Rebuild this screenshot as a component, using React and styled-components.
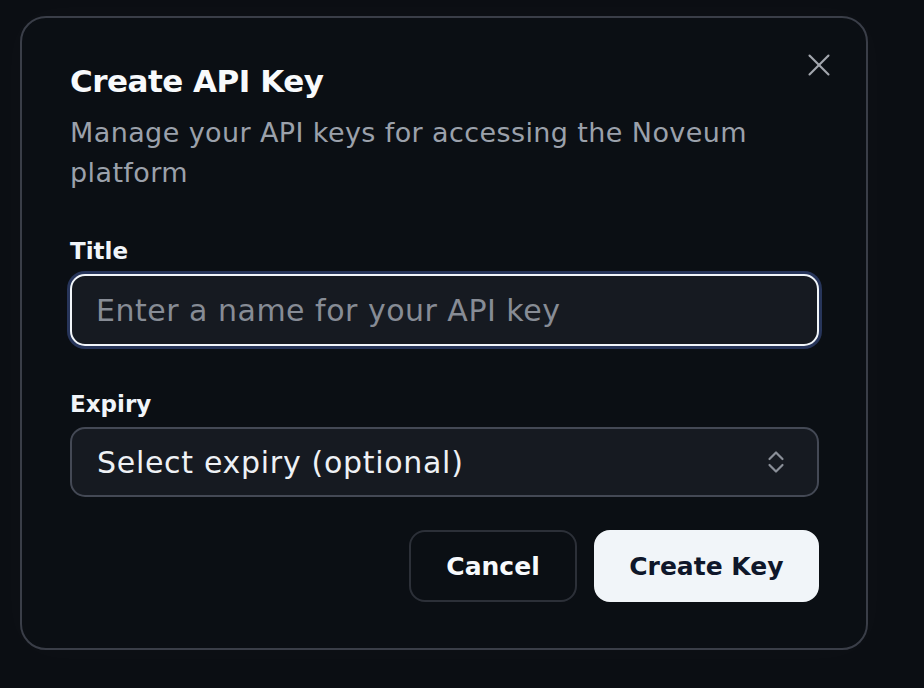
import React from 'react';
import styled, { createGlobalStyle } from 'styled-components';
import { X } from 'lucide-react';

const GlobalStyle = createGlobalStyle`
  html, body {
    margin: 0;
    padding: 0;
    background: #0b0e13;
  }
  body {
    font-family: "DejaVu Sans", "Liberation Sans", sans-serif;
    -webkit-font-smoothing: antialiased;
  }
`;

const Page = styled.div`
  width: 924px;
  height: 688px;
  padding: 16px 0 0 20px;
  box-sizing: border-box;
`;

const Dialog = styled.div`
  position: relative;
  width: 848px;
  height: 634px;
  box-sizing: border-box;
  padding: 43px 47px 48px 48px;
  background: #0b0f14;
  border: 2px solid #3a3e48;
  border-radius: 26px;
  box-shadow: 0 0 40px rgba(255, 255, 255, 0.025);
  display: flex;
  flex-direction: column;
`;

const CloseButton = styled.button`
  position: absolute;
  top: 28px;
  right: 28px;
  width: 38px;
  height: 38px;
  padding: 0;
  border: none;
  background: transparent;
  color: #a3a7ae;
  display: flex;
  align-items: center;
  justify-content: center;
  cursor: pointer;
`;

const Header = styled.div`
  display: flex;
  flex-direction: column;
  gap: 12px;
  margin-bottom: 43px;
`;

const Title = styled.h2`
  margin: 0;
  font-size: 31px;
  line-height: 40px;
  font-weight: 700;
  color: #f8fafc;
  letter-spacing: -0.5px;
`;

const Description = styled.p`
  margin: 0;
  font-size: 27px;
  line-height: 40px;
  font-weight: 400;
  letter-spacing: 0.4px;
  color: #9ba1ab;
  max-width: 700px;
`;

const Fields = styled.div`
  display: flex;
  flex-direction: column;
  gap: 43px;
`;

const Field = styled.div`
  display: flex;
  flex-direction: column;
  gap: 8px;
`;

const Label = styled.label`
  font-size: 23px;
  line-height: 30px;
  font-weight: 700;
  color: #f1f5f9;
`;

const Input = styled.input`
  height: 72px;
  box-sizing: border-box;
  padding: 0 24px;
  border: 2px solid #f1f5f9;
  border-radius: 15px;
  background: #161a21;
  box-shadow: 0 0 0 3px #27355a;
  color: #f1f5f9;
  font-family: inherit;
  font-size: 30px;
  letter-spacing: 0.5px;
  outline: none;
  caret-color: #f1f5f9;

  &::placeholder {
    color: #878c95;
  }
`;

const Select = styled.button`
  height: 70px;
  box-sizing: border-box;
  padding: 0 32px 0 25px;
  border: 2px solid #444955;
  border-radius: 15px;
  background: #161a21;
  color: #eef1f5;
  font-family: inherit;
  font-size: 30px;
  letter-spacing: 0.7px;
  display: flex;
  align-items: center;
  justify-content: space-between;
  cursor: pointer;
  text-align: left;
`;

const Chevrons = styled.svg`
  width: 18px;
  height: 26px;
  color: #8a8f98;
  flex-shrink: 0;
`;

const Footer = styled.div`
  display: flex;
  justify-content: flex-end;
  gap: 17px;
  margin-top: 33px;
`;

const Button = styled.button`
  height: 72px;
  padding: 0 ${(p) => (p.$primary ? '33.5px' : '35px')};
  border-radius: 16px;
  border: 2px solid ${(p) => (p.$primary ? '#f1f5f9' : '#2c3038')};
  background: ${(p) => (p.$primary ? '#f1f5f9' : '#0b0f14')};
  color: ${(p) => (p.$primary ? '#0f172a' : '#f8fafc')};
  font-family: inherit;
  font-size: 25px;
  font-weight: 700;
  cursor: pointer;
`;

const UpDownIcon = () => (
  <Chevrons viewBox="0 0 18 26" fill="none" stroke="currentColor" strokeWidth="2.2" strokeLinecap="round" strokeLinejoin="round">
    <path d="M2.5 10 L9 3.5 L15.5 10" />
    <path d="M2.5 16 L9 22.5 L15.5 16" />
  </Chevrons>
);

export default function App() {
  return (
    <>
      <GlobalStyle />
      <Page>
        <Dialog>
          <CloseButton aria-label="Close">
            <X size={38} strokeWidth={1.3} />
          </CloseButton>
          <Header>
            <Title>Create API Key</Title>
            <Description>
              Manage your API keys for accessing the Noveum platform
            </Description>
          </Header>
          <Fields>
            <Field>
              <Label>Title</Label>
              <Input autoFocus placeholder="Enter a name for your API key" />
            </Field>
            <Field>
              <Label>Expiry</Label>
              <Select>
                <span>Select expiry (optional)</span>
                <UpDownIcon />
              </Select>
            </Field>
          </Fields>
          <Footer>
            <Button>Cancel</Button>
            <Button $primary>Create Key</Button>
          </Footer>
        </Dialog>
      </Page>
    </>
  );
}
